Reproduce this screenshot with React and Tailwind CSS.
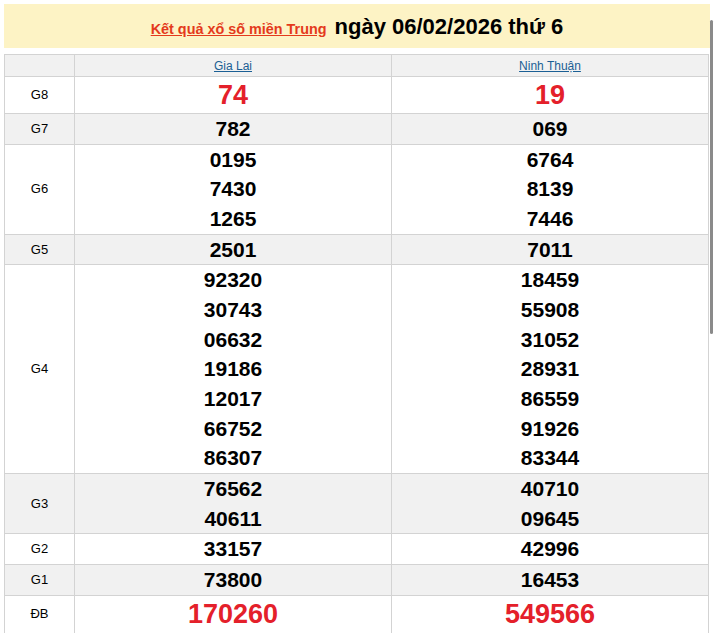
import React from 'react';

const rows = [
  { label: 'G8', a: ['74'], b: ['19'], big: true },
  { label: 'G7', a: ['782'], b: ['069'], gray: true },
  { label: 'G6', a: ['0195', '7430', '1265'], b: ['6764', '8139', '7446'] },
  { label: 'G5', a: ['2501'], b: ['7011'], gray: true },
  {
    label: 'G4',
    a: ['92320', '30743', '06632', '19186', '12017', '66752', '86307'],
    b: ['18459', '55908', '31052', '28931', '86559', '91926', '83344'],
  },
  { label: 'G3', a: ['76562', '40611'], b: ['40710', '09645'], gray: true },
  { label: 'G2', a: ['33157'], b: ['42996'] },
  { label: 'G1', a: ['73800'], b: ['16453'], gray: true },
  { label: 'ĐB', a: ['170260'], b: ['549566'], big: true, last: true },
];

function Numbers({ list, big, last }) {
  if (big) {
    return (
      <div className={`text-[27px] font-bold text-[#e4202a] ${last ? 'leading-[37px]' : 'leading-[36px]'}`}>
        {list[0]}
      </div>
    );
  }
  return (
    <div>
      {list.map((n) => (
        <div key={n} className="text-[21px] font-bold leading-[29.65px] text-black">
          {n}
        </div>
      ))}
    </div>
  );
}

export default function App() {
  return (
    <div className="relative min-h-[644px] bg-white pt-1 pl-1 pr-1 font-['Liberation_Sans',Arial,sans-serif]">
      {/* Title */}
      <div className="h-11 w-[706px] bg-[#fdf3c5] text-center leading-[45px]">
        <a href="#" className="text-[14.4px] font-bold text-[#e43a1c] underline">
          Kết quả xổ số miền Trung
        </a>
        <span className="ml-2 text-[22px] font-bold text-black">ngày 06/02/2026 thứ 6</span>
      </div>

      {/* Results table */}
      <table className="mt-1.5 w-[705px] table-fixed border-collapse text-center">
        <colgroup>
          <col className="w-[70px]" />
          <col className="w-[317px]" />
          <col className="w-[317px]" />
        </colgroup>
        <thead>
          <tr className="bg-[#f1f1f1]">
            <th className="h-[22px] border border-[#d3d3d3] p-0"></th>
            <th className="h-[22px] border border-[#d3d3d3] p-0 text-[12px] font-normal">
              <a href="#" className="text-[#1b5f94] underline">Gia Lai</a>
            </th>
            <th className="h-[22px] border border-[#d3d3d3] p-0 text-[12px] font-normal">
              <a href="#" className="text-[#1b5f94] underline">Ninh Thuận</a>
            </th>
          </tr>
        </thead>
        <tbody>
          {rows.map((r) => (
            <tr key={r.label} className={r.gray ? 'bg-[#f1f1f1]' : 'bg-white'}>
              <td className={`border-x border-t border-[#d3d3d3] p-0 text-[13px] text-black ${r.last ? '' : 'border-b'}`}>
                {r.label}
              </td>
              <td className={`border-x border-t border-[#d3d3d3] p-0 ${r.last ? '' : 'border-b'}`}>
                <Numbers list={r.a} big={r.big} last={r.last} />
              </td>
              <td className={`border-x border-t border-[#d3d3d3] p-0 ${r.last ? '' : 'border-b'}`}>
                <Numbers list={r.b} big={r.big} last={r.last} />
              </td>
            </tr>
          ))}
        </tbody>
      </table>

      {/* overlay scrollbar */}
      <div className="absolute top-[20px] right-[1px] h-[314px] w-[3px] rounded-full bg-[#8a8a8a]"></div>
    </div>
  );
}
